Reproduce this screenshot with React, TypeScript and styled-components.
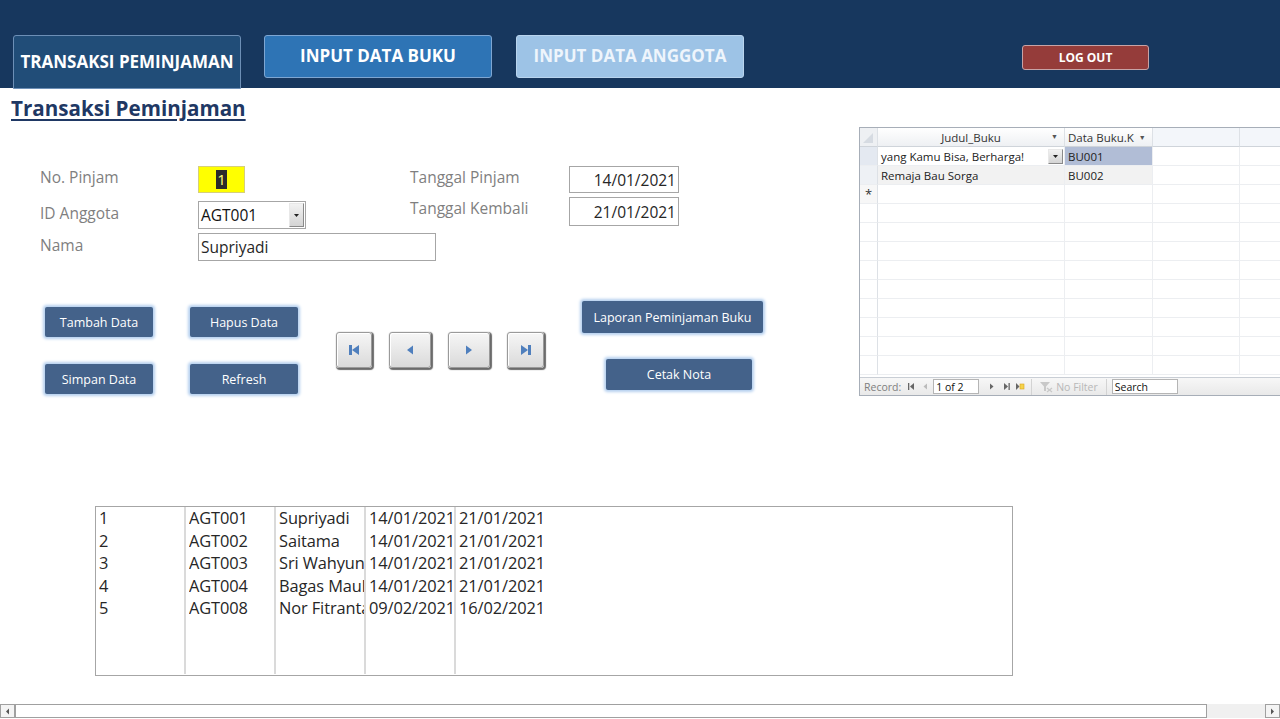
import React from "react";
import styled, { createGlobalStyle } from "styled-components";

const Global = createGlobalStyle`
  html, body { margin: 0; padding: 0; background: #fff; }
  body { font-family: "Open Sans", "Noto Sans", sans-serif; }
  * { box-sizing: border-box; }
`;

const Page = styled.div`
  width: 1280px;
  height: 719px;
  overflow: hidden;
  background: #fff;
  display: flex;
  flex-direction: column;
`;

const Header = styled.header`
  height: 88px;
  flex-shrink: 0;
  background: #17375e;
  display: flex;
  align-items: flex-start;
  padding: 35px 0 0 13px;
  position: relative;
  z-index: 2;
`;

type TabKind = "active" | "mid" | "light";
const tabBg: Record<TabKind, string> = { active: "#214d78", mid: "#2e74b5", light: "#9dc3e6" };
const tabBorder: Record<TabKind, string> = { active: "#6d8fb6", mid: "#7ea6d2", light: "#b9d4ee" };

const Tab = styled.div<{ $kind: TabKind }>`
  width: 228px;
  height: ${(p) => (p.$kind === "active" ? "54px" : "43px")};
  margin-right: ${(p) => (p.$kind === "active" ? "23px" : "24px")};
  background: ${(p) => tabBg[p.$kind]};
  border: 1px solid ${(p) => tabBorder[p.$kind]};
  border-radius: 3px 3px ${(p) => (p.$kind === "active" ? "0 0" : "3px 3px")};
  color: ${(p) => (p.$kind === "light" ? "#eef5fc" : "#fff")};
  font-weight: 700;
  font-size: 17px;
  display: flex;
  align-items: center;
  justify-content: center;
  white-space: nowrap;
  padding-bottom: 2px;
`;

const LogOut = styled.div`
  margin: 10px 0 0 254px;
  width: 127px;
  height: 25px;
  background: #953c3a;
  border: 1px solid #c7a3a6;
  border-radius: 3px;
  color: #fff;
  font-weight: 700;
  font-size: 12px;
  display: flex;
  align-items: center;
  justify-content: center;
`;

const Top = styled.div`
  display: flex;
  height: 307px;
  flex-shrink: 0;
`;

const Left = styled.div`
  width: 860px;
  display: flex;
  flex-direction: column;
`;

const Title = styled.h1`
  margin: 7px 0 0 11px;
  font-size: 20.6px;
  line-height: 26px;
  font-weight: 700;
  color: #1f3864;
  text-decoration: underline;
  text-underline-offset: 3px;
  text-decoration-thickness: 2px;
`;

const FormGrid = styled.div`
  margin: 45px 0 0 40px;
  display: grid;
  grid-template-columns: 158px 212px 159px 110px;
  grid-template-rows: 27px 32px 28px;
  row-gap: 4px;
`;

const Label = styled.div<{ $shift?: number }>`
  color: #7f7f7f;
  font-size: 15.5px;
  line-height: 20px;
  margin-top: ${(p) => p.$shift ?? 1}px;
  white-space: nowrap;
`;

const YellowBox = styled.div`
  width: 47px;
  height: 27px;
  background: #ffff00;
  border: 1px solid #d6cf7a;
  display: flex;
  align-items: center;
  justify-content: center;
`;

const Selected = styled.span`
  background: #2b2b2b;
  color: #ffff7a;
  font-size: 15px;
  line-height: 19px;
  padding: 0 1px;
`;

const Combo = styled.div`
  align-self: end;
  width: 108px;
  height: 28px;
  border: 1px solid #a6a6a6;
  display: flex;
  align-items: center;
  justify-content: space-between;
  padding-left: 2px;
  font-size: 15.5px;
  color: #111;
`;

const DropBtn = styled.div<{ $h?: number }>`
  width: 15px;
  height: ${(p) => p.$h ?? 24}px;
  margin-right: 1px;
  background: linear-gradient(#f2f2f2, #d4d4d4);
  border: 1px solid #8a8a8a;
  border-top-color: #e8e8e8;
  border-left-color: #e8e8e8;
  display: flex;
  align-items: center;
  justify-content: center;
  flex-shrink: 0;
`;

const TextBox = styled.div<{ $w: number; $right?: boolean; $h?: number }>`
  width: ${(p) => p.$w}px;
  height: ${(p) => p.$h ?? 28}px;
  border: 1px solid #a6a6a6;
  display: flex;
  align-items: center;
  justify-content: ${(p) => (p.$right ? "flex-end" : "flex-start")};
  padding: 0 2px;
  font-size: 15.5px;
  color: #262626;
  white-space: nowrap;
  position: relative;
  z-index: 1;
  background: #fff;
`;

const ButtonsRow = styled.div`
  margin-top: 40px;
  display: flex;
  align-items: flex-start;
`;

const ActionGrid = styled.div`
  margin: 6px 0 0 45px;
  display: grid;
  grid-template-columns: 108px 108px;
  grid-template-rows: 30px 30px;
  column-gap: 37px;
  row-gap: 27px;
`;

const Action = styled.div<{ $w?: number; $h?: number }>`
  width: ${(p) => p.$w ?? 108}px;
  height: ${(p) => p.$h ?? 30}px;
  background: #44628a;
  border-radius: 2px;
  box-shadow: 0 0 3px 2px #b5d0ef;
  color: #fff;
  font-size: 12.5px;
  display: flex;
  align-items: center;
  justify-content: center;
  white-space: nowrap;
`;

const NavGroup = styled.div`
  margin: 31px 0 0 38px;
  display: flex;
  gap: 17px;
`;

const NavBtn = styled.div<{ $w: number }>`
  width: ${(p) => p.$w}px;
  height: 36px;
  border-radius: 3px;
  background: linear-gradient(#f6f6f6, #dadada);
  border: 1px solid #9a9a9a;
  box-shadow: inset 1px 1px 0 #fff, 1px 1px 1px 1px #6b6b6b;
  display: flex;
  align-items: center;
  justify-content: center;
`;

const ReportGroup = styled.div`
  margin-left: 38px;
  display: flex;
  flex-direction: column;
  align-items: flex-start;
  gap: 26px;
`;

const Indent = styled.div`
  margin-left: 24px;
`;

/* Datasheet */
const Sheet = styled.div`
  margin-top: 39px;
  width: 421px;
  height: 269px;
  border: 1px solid #a7aeb8;
  border-right: none;
  display: flex;
  flex-direction: column;
  font-size: 11.5px;
  color: #222;
  background: #fff;
`;

const SheetGrid = styled.div`
  flex: 1;
  display: grid;
  grid-template-columns: 18px 187px 88px 87px 41px;
  grid-auto-rows: 19px;
  overflow: hidden;
`;

const HeadCell = styled.div<{ $blank?: boolean; $left?: boolean }>`
  background: ${(p) => (p.$blank ? "#f3f6fa" : "linear-gradient(#ffffff, #eef0f3)")};
  border-right: 1px solid #dde1e6;
  border-bottom: 1px solid #cfd4da;
  display: flex;
  align-items: center;
  justify-content: ${(p) => (p.$left ? "flex-start" : "center")};
  padding-left: ${(p) => (p.$left ? "3px" : "0")};
  gap: 5px;
  position: relative;
  color: #333;
  white-space: nowrap;
  overflow: hidden;
`;

const HeadArrow = styled.span<{ $abs?: boolean }>`
  position: ${(p) => (p.$abs ? "absolute" : "static")};
  right: 6px;
  top: 4px;
  font-size: 7px;
  color: #555;
`;

const Corner = styled.div`
  background: #eef0f3;
  border-right: 1px solid #dde1e6;
  border-bottom: 1px solid #cfd4da;
  position: relative;
  &::after {
    content: "";
    position: absolute;
    left: 3px;
    bottom: 3px;
    border-style: solid;
    border-width: 0 0 10px 10px;
    border-color: transparent transparent #d6dbe2 transparent;
  }
`;

const Selector = styled.div<{ $tone?: string }>`
  background: ${(p) => p.$tone ?? "#fff"};
  border-right: 1px solid #dde1e6;
  border-bottom: 1px solid #eceef1;
  display: flex;
  align-items: center;
  justify-content: center;
  font-size: 13px;
  color: #333;
`;

const Cell = styled.div<{ $bg?: string }>`
  background: ${(p) => p.$bg ?? "#fff"};
  border-right: 1px solid #eceef1;
  border-bottom: 1px solid #eceef1;
  display: flex;
  align-items: center;
  justify-content: space-between;
  padding-left: 3px;
  white-space: nowrap;
  overflow: hidden;
`;

const SheetFooter = styled.div`
  height: 18px;
  flex-shrink: 0;
  border-top: 1px solid #c9ced5;
  background: linear-gradient(#f7f7f7, #e9e9e9);
  display: flex;
  align-items: center;
  padding-left: 4px;
  font-size: 10.5px;
  color: #7f7f7f;
  white-space: nowrap;
`;

const FooterSep = styled.div<{ $ml?: number }>`
  width: 1px;
  height: 16px;
  background: #d3d3d3;
  margin-left: ${(p) => p.$ml ?? 4}px;
`;

const FooterBox = styled.div<{ $w: number }>`
  width: ${(p) => p.$w}px;
  height: 15px;
  background: #fff;
  border: 1px solid #b5b5b5;
  color: #111;
  padding-left: 2px;
  display: flex;
  align-items: center;
  font-size: 10.5px;
`;

const FooterIcon = styled.span<{ $ml?: number }>`
  margin-left: ${(p) => p.$ml ?? 6}px;
  display: inline-flex;
  align-items: center;
`;

const Faded = styled.span`
  color: #b8b8b8;
  margin-left: 3px;
`;

/* List */
const ListBox = styled.div`
  margin: 111px 0 0 95px;
  width: 918px;
  height: 170px;
  border: 1px solid #a6a6a6;
  display: flex;
  flex-shrink: 0;
`;

const ListCol = styled.div<{ $line?: boolean }>`
  width: 90px;
  padding-top: 0;
  margin-bottom: 1px;
  border-right: ${(p) => (p.$line ? "2px solid #dadada" : "none")};
  padding-left: 3px;
  overflow: hidden;
  white-space: nowrap;
  text-overflow: clip;
  font-size: 16.4px;
  line-height: 22.5px;
  letter-spacing: -0.1px;
  color: #262626;
`;

const ListCell = styled.div`
  overflow: hidden;
  white-space: nowrap;
`;

/* Scrollbar */
const ScrollBar = styled.div`
  margin-top: auto;
  margin-bottom: 1px;
  height: 14px;
  display: flex;
  background: #f0f0f0;
  flex-shrink: 0;
`;

const ScrollBtn = styled.div`
  width: 15px;
  height: 14px;
  border: 1px solid #a0a0a0;
  background: #f4f4f4;
  display: flex;
  align-items: center;
  justify-content: center;
`;

const ScrollTrack = styled.div`
  width: 1192px;
  height: 14px;
  border: 1px solid #a0a0a0;
  background: #fff;
`;

const ScrollGap = styled.div`
  flex: 1;
  background: #f0f0f0;
`;

const BLUE = "#4f7fbd";

const NavIcon = ({ kind }: { kind: "first" | "prev" | "next" | "last" }) => (
  <svg width="14" height="14" viewBox="0 0 14 14">
    {kind === "first" && (
      <>
        <rect x="2" y="2" width="3" height="10" fill={BLUE} />
        <polygon points="12,2 5,7 12,12" fill={BLUE} />
      </>
    )}
    {kind === "prev" && <polygon points="10,2.5 4,7 10,11.5" fill={BLUE} />}
    {kind === "next" && <polygon points="4,2.5 10,7 4,11.5" fill={BLUE} />}
    {kind === "last" && (
      <>
        <polygon points="2,2 9,7 2,12" fill={BLUE} />
        <rect x="9" y="2" width="3" height="10" fill={BLUE} />
      </>
    )}
  </svg>
);

const DownTri = () => (
  <svg width="7" height="5" viewBox="0 0 7 5">
    <polygon points="1,1 6,1 3.5,4" fill="#222" />
  </svg>
);

const SmallNav = ({ kind, color = "#666" }: { kind: "first" | "prev" | "next" | "last" | "new"; color?: string }) => (
  <svg width="10" height="9" viewBox="0 0 10 9">
    {kind === "first" && (
      <>
        <rect x="1" y="1" width="1.3" height="7" fill={color} />
        <polygon points="7,1 3,4.5 7,8" fill={color} />
      </>
    )}
    {kind === "prev" && <polygon points="6,1.5 2.5,4.5 6,7.5" fill={color} />}
    {kind === "next" && <polygon points="3,1.5 6.5,4.5 3,7.5" fill={color} />}
    {kind === "last" && (
      <>
        <polygon points="2,1 6,4.5 2,8" fill={color} />
        <rect x="6.5" y="1" width="1.3" height="7" fill={color} />
      </>
    )}
    {kind === "new" && (
      <>
        <polygon points="1,1 4.5,4.5 1,8" fill={color} />
        <rect x="5" y="2" width="4" height="5" fill="#f5d34a" stroke="#d9a520" strokeWidth="0.6" />
      </>
    )}
  </svg>
);

const FilterIcon = () => (
  <svg width="14" height="12" viewBox="0 0 14 12">
    <polygon points="1,1 11,1 7,5.5 7,10 5,10 5,5.5" fill="#c8c8c8" />
    <line x1="8" y1="7" x2="13" y2="11" stroke="#c8c8c8" strokeWidth="1.3" />
    <line x1="13" y1="7" x2="8" y2="11" stroke="#c8c8c8" strokeWidth="1.3" />
  </svg>
);

const ScrollArrow = ({ dir }: { dir: "l" | "r" }) => (
  <svg width="5" height="7" viewBox="0 0 5 7">
    {dir === "l" ? <polygon points="4,0.5 1,3.5 4,6.5" fill="#555" /> : <polygon points="1,0.5 4,3.5 1,6.5" fill="#555" />}
  </svg>
);

const rows = [
  ["1", "AGT001", "Supriyadi", "14/01/2021", "21/01/2021"],
  ["2", "AGT002", "Saitama", "14/01/2021", "21/01/2021"],
  ["3", "AGT003", "Sri Wahyuni", "14/01/2021", "21/01/2021"],
  ["4", "AGT004", "Bagas Maulana", "14/01/2021", "21/01/2021"],
  ["5", "AGT008", "Nor Fitranta", "09/02/2021", "16/02/2021"],
];

const emptyRows = Array.from({ length: 9 });

export default function App() {
  return (
    <Page>
      <Global />
      <Header>
        <Tab $kind="active">TRANSAKSI PEMINJAMAN</Tab>
        <Tab $kind="mid">INPUT DATA BUKU</Tab>
        <Tab $kind="light">INPUT DATA ANGGOTA</Tab>
        <LogOut>LOG OUT</LogOut>
      </Header>

      <Top>
        <Left>
          <Title>Transaksi Peminjaman</Title>
          <FormGrid>
            <Label>No. Pinjam</Label>
            <YellowBox>
              <Selected>1</Selected>
            </YellowBox>
            <Label>Tanggal Pinjam</Label>
            <TextBox $w={110} $h={27} $right>
              14/01/2021
            </TextBox>

            <Label $shift={6}>ID Anggota</Label>
            <Combo>
              AGT001
              <DropBtn>
                <DownTri />
              </DropBtn>
            </Combo>
            <Label>Tanggal Kembali</Label>
            <TextBox $w={110} $h={29} $right>
              21/01/2021
            </TextBox>

            <Label $shift={2}>Nama</Label>
            <TextBox $w={238}>Supriyadi</TextBox>
          </FormGrid>

          <ButtonsRow>
            <ActionGrid>
              <Action>Tambah Data</Action>
              <Action>Hapus Data</Action>
              <Action>Simpan Data</Action>
              <Action>Refresh</Action>
            </ActionGrid>
            <NavGroup>
              <NavBtn $w={36}>
                <NavIcon kind="first" />
              </NavBtn>
              <NavBtn $w={42}>
                <NavIcon kind="prev" />
              </NavBtn>
              <NavBtn $w={42}>
                <NavIcon kind="next" />
              </NavBtn>
              <NavBtn $w={37}>
                <NavIcon kind="last" />
              </NavBtn>
            </NavGroup>
            <ReportGroup>
              <Action $w={181} $h={32}>Laporan Peminjaman Buku</Action>
              <Indent>
                <Action $w={146} $h={31}>Cetak Nota</Action>
              </Indent>
            </ReportGroup>
          </ButtonsRow>
        </Left>

        <Sheet>
          <SheetGrid>
            <Corner />
            <HeadCell>
              Judul_Buku
              <HeadArrow $abs>▼</HeadArrow>
            </HeadCell>
            <HeadCell $left>
              Data Buku.K
              <HeadArrow>▼</HeadArrow>
            </HeadCell>
            <HeadCell $blank />
            <HeadCell $blank />

            <Selector $tone="#e4e9f1" />
            <Cell>
              yang Kamu Bisa, Berharga!
              <DropBtn $h={15}>
                <DownTri />
              </DropBtn>
            </Cell>
            <Cell $bg="#b1bdd6">BU001</Cell>
            <Cell />
            <Cell />

            <Selector $tone="#eef1f5" />
            <Cell $bg="#f2f2f2">Remaja Bau Sorga</Cell>
            <Cell $bg="#f2f2f2">BU002</Cell>
            <Cell />
            <Cell />

            <Selector $tone="#f7f7f7">*</Selector>
            <Cell />
            <Cell />
            <Cell />
            <Cell />

            {emptyRows.map((_, i) => (
              <React.Fragment key={i}>
                <Selector />
                <Cell />
                <Cell />
                <Cell />
                <Cell />
              </React.Fragment>
            ))}
          </SheetGrid>
          <SheetFooter>
            Record:
            <FooterIcon $ml={6}>
              <SmallNav kind="first" />
            </FooterIcon>
            <FooterIcon $ml={4}>
              <SmallNav kind="prev" color="#bbb" />
            </FooterIcon>
            <FooterIcon $ml={2}>
              <FooterBox $w={46}>1 of 2</FooterBox>
            </FooterIcon>
            <FooterIcon $ml={8}>
              <SmallNav kind="next" />
            </FooterIcon>
            <FooterIcon $ml={5}>
              <SmallNav kind="last" />
            </FooterIcon>
            <FooterIcon $ml={3}>
              <SmallNav kind="new" />
            </FooterIcon>
            <FooterSep $ml={6} />
            <FooterIcon $ml={7}>
              <FilterIcon />
            </FooterIcon>
            <Faded>No Filter</Faded>
            <FooterSep $ml={8} />
            <FooterIcon $ml={5}>
              <FooterBox $w={66}>Search</FooterBox>
            </FooterIcon>
          </SheetFooter>
        </Sheet>
      </Top>

      <ListBox>
        {[0, 1, 2, 3, 4].map((c) => (
          <ListCol key={c} $line={c < 4}>
            {rows.map((r, i) => (
              <ListCell key={i}>{r[c]}</ListCell>
            ))}
          </ListCol>
        ))}
      </ListBox>

      <ScrollBar>
        <ScrollBtn>
          <ScrollArrow dir="l" />
        </ScrollBtn>
        <ScrollTrack />
        <ScrollGap />
        <ScrollBtn>
          <ScrollArrow dir="r" />
        </ScrollBtn>
      </ScrollBar>
    </Page>
  );
}
